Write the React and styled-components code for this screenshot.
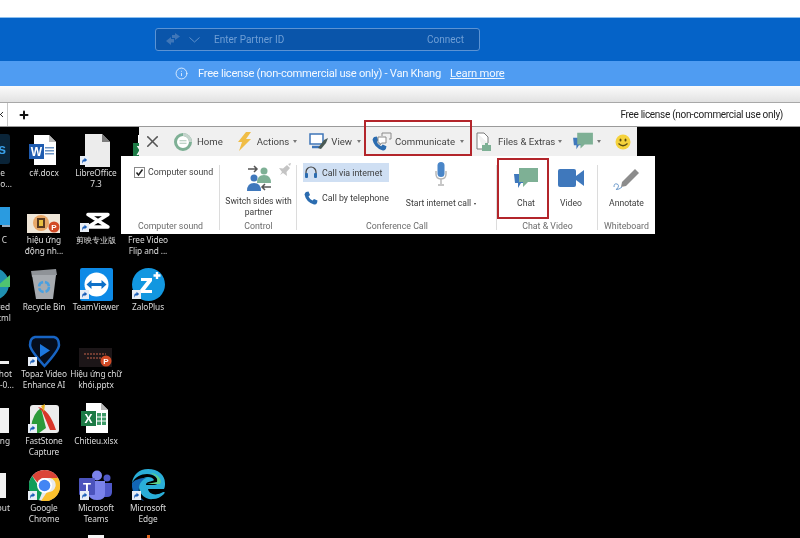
import React from "react";
import styled, { createGlobalStyle } from "styled-components";
import { Info, X, Plus } from "lucide-react";

const Global = createGlobalStyle`
  html, body { margin: 0; padding: 0; background: #000; }
  body { font-family: "Roboto", "Liberation Sans", sans-serif; overflow: hidden; }
`;

const Page = styled.div`
  width: 800px;
  height: 538px;
  display: flex;
  flex-direction: column;
  overflow: hidden;
  filter: blur(0.3px);
  & > * {
    flex-shrink: 0;
  }
`;

const TopWhite = styled.div`
  height: 18px;
  background: #fff;
  border-bottom: 1px solid #8cc0f0;
  box-sizing: border-box;
`;

const PartnerBar = styled.div`
  height: 43px;
  background: #0563c8;
  padding: 10px 0 0 155px;
  box-sizing: border-box;
`;

const PartnerInput = styled.div`
  width: 325px;
  height: 23px;
  box-sizing: border-box;
  display: flex;
  align-items: center;
  padding: 0 15px 0 10px;
  background: #0a55aa;
  border: 1px solid #5b93d4;
  border-radius: 3px;
  color: #6f9fd6;
  font-size: 10px;
`;

const PartnerPlaceholder = styled.span`
  margin-left: 14px;
  flex: 1;
`;

const LicenseBar = styled.div`
  height: 25px;
  background: #4f9cf2;
  color: #f2f8ff;
  display: flex;
  align-items: center;
  padding-left: 175px;
  font-size: 11.2px;
  white-space: nowrap;
`;

const LicenseText = styled.span`
  margin-left: 10px;
  width: 252px;
  letter-spacing: -0.28px;
`;

const LearnMore = styled.span`
  text-decoration: underline;
  letter-spacing: -0.2px;
`;

const GrayStrip = styled.div`
  height: 16px;
  background: linear-gradient(#fbfbfb, #e2e2e2);
  border-bottom: 1px solid #a8a8a8;
`;

const TabStrip = styled.div`
  height: 24px;
  background: #fff;
  border-bottom: 1px solid #9a9a9a;
  box-sizing: border-box;
  display: flex;
  align-items: center;
  font-size: 10px;
  color: #222;
`;

const TabClose = styled.div`
  width: 11px;
  height: 100%;
  border-right: 1px solid #c8c8c8;
  display: flex;
  align-items: center;
  justify-content: flex-start;
  margin-left: -4px;
`;

const TabPlus = styled.div`
  margin-left: 10px;
  flex: 1;
  display: flex;
`;

const TabNote = styled.span`
  margin-right: 17px;
  letter-spacing: -0.3px;
`;

const Desktop = styled.div`
  position: relative;
  flex: 1 1 0;
  min-height: 0;
  background: #000;
`;

const IconGrid = styled.div`
  display: grid;
  grid-template-columns: repeat(4, 52px);
  grid-auto-rows: 67px;
  margin-left: -34px;
  padding-top: 6px;
`;

const Cell = styled.div`
  display: flex;
  flex-direction: column;
  align-items: center;
`;

const IconBox = styled.div`
  position: relative;
  width: 34px;
  height: 34px;
  display: flex;
  align-items: ${(p) => (p.$top ? "flex-start" : "center")};
  justify-content: center;
`;

const CutIcon = styled(IconBox)`
  align-self: flex-end;
  margin-right: 8px;
  overflow: hidden;
`;

const Shortcut = styled.div`
  position: absolute;
  left: 1px;
  bottom: 2px;
  width: 9px;
  height: 9px;
  background: #e8eef6;
  display: flex;
`;

const DeskLabel = styled.div`
  width: 52px;
  font-family: "Noto Sans", sans-serif;
  font-size: 8.3px;
  line-height: 11px;
  color: #dcdcdc;
  text-align: center;
  white-space: pre-line;
  letter-spacing: -0.1px;
`;

const CutLine = styled.div`
  width: 52px;
  box-sizing: border-box;
  padding-right: ${(p) => 18 - p.$end}px;
  font-family: "Noto Sans", sans-serif;
  font-size: 8.3px;
  line-height: 11px;
  color: #dcdcdc;
  text-align: right;
`;

const Panel = styled.div`
  position: absolute;
  left: 121px;
  top: 0;
  width: 534px;
  display: flex;
  flex-direction: column;
  align-items: flex-start;
`;

const Toolbar = styled.div`
  margin-left: 18px;
  width: 498px;
  height: 29px;
  background: #f0f0f0;
  display: flex;
  align-items: center;
  font-size: 9.6px;
  color: #444;
  box-sizing: border-box;
  padding-left: 4px;
`;

const ToolItem = styled.div`
  display: flex;
  align-items: center;
  gap: ${(p) => p.$gap || 3}px;
  margin-left: ${(p) => p.$ml || 0}px;
  white-space: nowrap;
`;

const Caret = styled.span`
  width: 0;
  height: 0;
  border-left: 2.5px solid transparent;
  border-right: 2.5px solid transparent;
  border-top: 3px solid #777;
  margin-left: ${(p) => p.$ml || 0}px;
`;

const Ribbon = styled.div`
  width: 534px;
  height: 78px;
  background: #fff;
  display: flex;
`;

const Group = styled.div`
  width: ${(p) => p.$w}px;
  box-sizing: border-box;
  display: flex;
  flex-direction: column;
  position: relative;
  &::after {
    content: "";
    position: absolute;
    right: 0;
    top: 9px;
    bottom: 4px;
    width: 1px;
    background: ${(p) => (p.$last ? "transparent" : "#dcdcdc")};
  }
`;

const GroupBody = styled.div`
  flex: 1;
  display: flex;
  min-height: 0;
`;

const GroupTitle = styled.div`
  height: 16px;
  text-align: center;
  font-size: 8.8px;
  line-height: 16px;
  color: #6c6c6c;
  white-space: nowrap;
`;

const CheckRow = styled.div`
  display: flex;
  align-items: center;
  gap: 3px;
  padding: 10px 0 0 13px;
  height: 12px;
  font-size: 8.8px;
  color: #444;
`;

const CheckBox = styled.span`
  width: 11px;
  height: 11px;
  box-sizing: border-box;
  border: 1px solid #8a8a8a;
  background: #fff;
  display: flex;
`;

const BigButton = styled.div`
  width: ${(p) => p.$w || 50}px;
  margin-left: ${(p) => p.$ml || 0}px;
  display: flex;
  flex-direction: column;
  align-items: center;
  font-size: 8.6px;
  line-height: 11px;
  color: #3c3c3c;
  text-align: center;
  white-space: nowrap;
`;

const BigIcon = styled.div`
  height: ${(p) => p.$h || 42}px;
  padding-top: ${(p) => p.$pt || 0}px;
  box-sizing: border-box;
  display: flex;
  align-items: flex-start;
  justify-content: center;
  position: relative;
  width: 100%;
`;

const Pin = styled.div`
  position: absolute;
  right: 5px;
  top: 7px;
  display: flex;
`;

const CallList = styled.div`
  width: 90px;
  padding: 7px 0 0 6px;
  display: flex;
  flex-direction: column;
  gap: 6px;
`;

const CallRow = styled.div`
  width: 86px;
  height: 19px;
  box-sizing: border-box;
  display: flex;
  align-items: center;
  gap: 4px;
  padding-left: 1px;
  font-size: 8.8px;
  color: #3c3c3c;
  white-space: nowrap;
  background: ${(p) => (p.$active ? "#cfdff3" : "transparent")};
`;

const TinyCaret = styled.span`
  display: inline-block;
  margin-left: 3px;
  vertical-align: middle;
  border-left: 1.5px solid transparent;
  border-right: 1.5px solid transparent;
  border-top: 2.5px solid #333;
`;

const Annotation = styled.div`
  position: absolute;
  left: ${(p) => p.$x}px;
  top: ${(p) => p.$y}px;
  width: ${(p) => p.$w}px;
  height: ${(p) => p.$h}px;
  box-sizing: border-box;
  border: 2.5px solid #b3252b;
  pointer-events: none;
`;

const Swap = () => (
  <svg width="14" height="13" viewBox="0 0 14 13">
    <path d="M6 2h3V0l5 3.500L9 7V5H6zM8 6H5V4L0 8l5 4V9.500h3z" fill="#3f76b8" />
  </svg>
);

const Chevron = () => (
  <svg width="11" height="6" viewBox="0 0 11 6" style={{ marginLeft: 9 }}>
    <path d="M.5.500 5.500 5 10.500.500" fill="none" stroke="#5c90cc" />
  </svg>
);

const ShortcutMark = () => (
  <Shortcut>
    <svg width="9" height="9" viewBox="0 0 10 10">
      <path d="M2.500 8.500V5.500Q2.500 3.500 5 3.500V2L8 4.500 5 7V5.500Q3.500 5.500 2.500 8.500z" fill="#1b5fb8" />
    </svg>
  </Shortcut>
);

const DocBase = ({ children, body = "#fff" }) => (
  <svg width="32" height="32" viewBox="0 0 32 32">
    <path d="M6 1h15l7 7v23H6z" fill={body} />
    <path d="M21 1l7 7h-7z" fill="#b8b8b8" />
    {children}
  </svg>
);

const WordDoc = () => (
  <DocBase>
    <rect x="17" y="13" width="9" height="1.500" fill="#6d94c4" />
    <rect x="17" y="16" width="9" height="1.500" fill="#6d94c4" />
    <rect x="17" y="19" width="9" height="1.500" fill="#6d94c4" />
    <rect x="1" y="10" width="15" height="15" fill="#1f5cb0" />
    <text x="8.500" y="21.500" fontSize="12" fontWeight="700" fill="#fff" textAnchor="middle" fontFamily="Liberation Sans">W</text>
  </DocBase>
);

const ExcelDoc = () => (
  <DocBase>
    <rect x="17" y="11" width="9" height="12" fill="#3e9a68" />
    <path d="M17 15h9M17 19h9M21.500 11v12" stroke="#fff" strokeWidth="1" />
    <rect x="1" y="9" width="15" height="15" fill="#1c7a45" />
    <text x="8.500" y="21" fontSize="12" fontWeight="700" fill="#fff" textAnchor="middle" fontFamily="Liberation Sans">X</text>
  </DocBase>
);

const Libre = () => (
  <svg width="32" height="33" viewBox="0 0 32 33">
    <path d="M5 0h17l8 8v25H5z" fill="#ececec" />
    <path d="M22 0l8 8h-8z" fill="#7d7d7d" />
  </svg>
);

const Thumb = ({ bg, dark }) => (
  <svg width="34" height="34" viewBox="0 0 34 34">
    <rect x="0" y="14" width="33" height="19" fill={bg} />
    {dark ? (
      <path d="M5 20h22M8 24h16" stroke="#8a4a3a" strokeWidth="1.500" strokeDasharray="2 1" />
    ) : (
      <g>
        <circle cx="14" cy="23" r="8" fill="#e8a868" />
        <rect x="10" y="18" width="8" height="10" fill="#5a3a20" />
        <rect x="12" y="20" width="4" height="6" fill="#e8c040" />
      </g>
    )}
    <circle cx="27" cy="27" r="5.500" fill="#d24a25" />
    <text x="27" y="30" fontSize="8" fontWeight="700" fill="#fff" textAnchor="middle" fontFamily="Liberation Sans">P</text>
  </svg>
);

const CapCut = () => (
  <svg width="24" height="18" viewBox="0 0 24 18" style={{ marginTop: 7, marginLeft: 3 }}>
    <path d="M2 2.500H22L2 15H22Z" fill="none" stroke="#fff" strokeWidth="3.400" strokeLinejoin="round" />
  </svg>
);

const RecycleBin = () => (
  <svg width="28" height="32" viewBox="0 0 28 32">
    <path d="M1 3l25-2 1 6-25 2z" fill="#8f9398" />
    <path d="M2 7h24l-3 24H6z" fill="#a7abb0" />
    <circle cx="14" cy="19" r="5" fill="none" stroke="#4aa0e0" strokeWidth="2.500" strokeDasharray="6 2" />
  </svg>
);

const TeamViewer = () => (
  <svg width="33" height="33" viewBox="0 0 33 33">
    <rect width="33" height="33" rx="2" fill="#0d8ae6" />
    <circle cx="16.500" cy="16.500" r="12" fill="#fff" />
    <path d="M6.500 16.500l5-4.500v3h10v-3l5 4.500-5 4.500v-3h-10v3z" fill="#0d70c8" />
  </svg>
);

const Zalo = () => (
  <svg width="33" height="33" viewBox="0 0 33 33">
    <circle cx="16.500" cy="16.500" r="16.500" fill="#1297e0" />
    <path d="M9 10h11v3l-7 9h7v3H8v-3l7-9H9z" fill="#fff" />
    <path d="M25 4v7M21.500 7.500h7" stroke="#fff" strokeWidth="2.400" />
  </svg>
);

const Topaz = () => (
  <svg width="33" height="33" viewBox="0 0 33 33">
    <path d="M7 2h19q5 1 5 8 0 5-14.500 21Q2 15 2 10q0-7 5-8z" fill="#050d1c" stroke="#1764c4" strokeWidth="2.500" />
    <path d="M12 9l10 6.500L12 22z" fill="#1c78e0" />
  </svg>
);

const FastStone = () => (
  <svg width="31" height="31" viewBox="0 0 31 31">
    <rect x="1" y="2" width="29" height="28" rx="3" fill="#ececec" />
    <path d="M2 24Q4 10 12 5l5 20-7 5H5z" fill="#2c9a3a" />
    <path d="M9 4Q20 6 27 27h-6L13 8z" fill="#d8362a" />
    <path d="M12 3l4-2-1 8z" fill="#e8b020" />
  </svg>
);

const Chrome = () => (
  <svg width="31" height="31" viewBox="0 0 31 31">
    <circle cx="15.500" cy="15.500" r="15.500" fill="#e8eaed" />
    <path d="M15.500 0A15.500 15.500 0 0 1 29 8H15.500a7.500 7.500 0 0 0-7 4.500L3.200 6A15.500 15.500 0 0 1 15.500 0z" fill="#db4437" />
    <path d="M3.200 6l6 9.500a7 7 0 0 0 4 6.500L10 30.200A15.500 15.500 0 0 1 3.200 6z" fill="#0f9d58" />
    <path d="M29 8a15.500 15.500 0 0 1-17 23l6-9a7 7 0 0 0 3-14z" fill="#fbc02d" />
    <circle cx="15.500" cy="15.500" r="7.500" fill="#fff" />
    <circle cx="15.500" cy="15.500" r="5.800" fill="#4285f4" />
  </svg>
);

const Teams = () => (
  <svg width="34" height="31" viewBox="0 0 34 31">
    <circle cx="18" cy="5.500" r="5" fill="#7b83eb" />
    <circle cx="28" cy="8" r="3.500" fill="#5059c9" />
    <path d="M23 13h10v9q0 5-5 5h-4z" fill="#5059c9" />
    <path d="M9 11h17v13q0 6-8 6-7 0-9-6z" fill="#7b83eb" />
    <rect x="0" y="8" width="16" height="17" rx="1" fill="#4b53bc" />
    <text x="8" y="21.500" fontSize="13" fontWeight="700" fill="#fff" textAnchor="middle" fontFamily="Liberation Sans">T</text>
  </svg>
);

const Edge = () => (
  <svg width="33" height="33" viewBox="0 0 33 33">
    <path d="M16 0C7 0 1 6 0 14c3-6 9-9 15-9 7 0 11 4 11 8 0 2-2 3-4 3h-8c0-4 6-3 8-5-1-2-3-3-6-3-6 0-10 5-9 11 1 7 7 12 14 11 4 0 8-2 11-5 2-3-1-2-3-1-6 3-12 1-13-4h16c1-2 1-4 1-6C33 6 26 0 16 0z" fill="#2aaed8" />
    <path d="M0 14c-1 8 4 16 12 18-4-3-6-8-5-13 0-4 3-8 7-10C8 9 2 11 0 14z" fill="#1265b5" />
    <path d="M15 15h13c3-3-2-11-10-11C24 6 26 9 25 13z" fill="#5fd08a" />
  </svg>
);

const PartIcon = ({ kind }) => {
  if (kind === "ps")
    return (
      <svg width="34" height="32" viewBox="0 0 34 32">
        <rect x="0" y="0" width="34" height="30" rx="3" fill="#0a2438" />
        <text x="30" y="20" fontSize="14" fontWeight="700" fill="#3aa0e8" textAnchor="end" fontFamily="Liberation Sans">s</text>
      </svg>
    );
  if (kind === "pc")
    return (
      <svg width="34" height="34" viewBox="0 0 34 34">
        <rect x="0" y="7" width="34" height="18" fill="#2a9be0" />
        <rect x="26" y="25" width="8" height="2" fill="#9ab" />
      </svg>
    );
  if (kind === "circle")
    return (
      <svg width="34" height="34" viewBox="0 0 34 34">
        <circle cx="17" cy="17" r="16" fill="#1f8fb0" />
        <path d="M34 8v12H20z" fill="#4fc470" />
      </svg>
    );
  if (kind === "bar")
    return (
      <svg width="34" height="34" viewBox="0 0 34 34">
        <rect x="0" y="27" width="33" height="3" fill="#eee" />
      </svg>
    );
  return (
    <svg width="34" height="34" viewBox="0 0 34 34">
      <rect x="0" y={kind === "doc2" ? 5 : 7} width={kind === "doc2" ? 30 : 33} height="25" fill="#f2f2f2" />
    </svg>
  );
};

const HomeIcon = () => (
  <svg width="20" height="20" viewBox="0 0 20 20">
    <circle cx="10" cy="10" r="7.500" fill="#fff" stroke="#7eb095" strokeWidth="3" />
    <path d="M17.500 10A7.500 7.500 0 0 0 10 2.500" fill="none" stroke="#c4d4cc" strokeWidth="3" />
    <path d="M6.500 8.800h7M6.500 11.200h7" stroke="#a9c6b6" strokeWidth="1.100" />
  </svg>
);

const Bolt = () => (
  <svg width="15" height="19" viewBox="0 0 15 19">
    <path d="M9 0L1 10h4L2 19 14 7H9l5-7z" fill="#f0bd45" />
  </svg>
);

const ViewIcon = () => (
  <svg width="19" height="17" viewBox="0 0 19 17">
    <rect x="1" y="1" width="13" height="10" fill="#fff" stroke="#3f76b8" strokeWidth="1.500" />
    <path d="M3 14h9" stroke="#3f76b8" strokeWidth="2.500" />
    <path d="M9 15l6-8 4-2-2 5-5 6z" fill="#4a5a55" />
  </svg>
);

const PhoneGlyph = ({ size = 13, color = "#2b6cb0" }) => (
  <svg width={size} height={size} viewBox="0 0 14 14">
    <path d="M2 1l2.500-.500L6 4 4.500 5.500q1 2.500 4 4L10 8l3.500 1.500L13 12q-1 2-3 1.500Q2 11 .5 3.500 1 1.500 2 1z" fill={color} />
  </svg>
);

const CommIcon = () => (
  <svg width="20" height="19" viewBox="0 0 20 19">
    <g transform="translate(0 4)">
      <PhoneGlyph size={15} />
    </g>
    <path d="M6 5h8v6H9.500L8 13v-2H6z" fill="#fff" stroke="#8a8a8a" />
    <path d="M10 4V1h9v6h-2" fill="none" stroke="#8a8a8a" />
  </svg>
);

const FilesIcon = () => (
  <svg width="20" height="20" viewBox="0 0 20 20">
    <path d="M2 1h7l4 4v6M2 1v16h6" fill="#fff" stroke="#7a7a7a" />
    <path d="M7 13h3v-2h3v2h3v6H7z" fill="#7eb095" />
  </svg>
);

const ChatBubbles = ({ w = 24, h = 23 }) => (
  <svg width={w} height={h} viewBox="0 0 24 23">
    <path d="M0 7h10v9H7l-3 5v-5H1z" fill="#3f78bc" />
    <path d="M5 1h19v14H14l-5 5v-5H5z" fill="#7eb095" />
  </svg>
);

const Smiley = () => (
  <svg width="16" height="16" viewBox="0 0 16 16">
    <circle cx="8" cy="8" r="7.500" fill="#f5d23c" />
    <ellipse cx="5.500" cy="6" rx="1" ry="1.600" fill="#5a4a10" />
    <ellipse cx="10.500" cy="6" rx="1" ry="1.600" fill="#5a4a10" />
    <path d="M3.500 9.500Q8 14 12.500 9.500" fill="none" stroke="#5a4a10" strokeWidth="1.200" />
  </svg>
);

const SwitchIcon = () => (
  <svg width="26" height="28" viewBox="0 0 26 28">
    <circle cx="8" cy="14" r="3.500" fill="#3f78bc" />
    <path d="M1 27q0-8 7-8t7 8z" fill="#3f78bc" />
    <circle cx="18" cy="7" r="3.500" fill="#7eb095" />
    <path d="M11 19q0-8 7-8t7 8z" fill="#7eb095" />
    <path d="M2 5h9M8 2l3 3-3 3M25 23h-9M19 20l-3 3 3 3" fill="none" stroke="#555" strokeWidth="1.500" />
  </svg>
);

const PinIcon = () => (
  <svg width="13" height="13" viewBox="0 0 13 13">
    <path d="M0 5l4 .500L8 2l3 3-3.500 4 .500 4-4-3-3 2 2-3z" fill="#c4c4c4" />
    <path d="M9 1l3-1-1 3z" fill="#c4c4c4" />
  </svg>
);

const Headset = () => (
  <svg width="14" height="14" viewBox="0 0 14 14">
    <path d="M2 8V6a5 5 0 0 1 10 0v2" fill="none" stroke="#444" strokeWidth="1.200" />
    <rect x="1" y="7" width="3" height="5" rx="1" fill="#2b6cb0" />
    <rect x="10" y="7" width="3" height="5" rx="1" fill="#2b6cb0" />
  </svg>
);

const Mic = () => (
  <svg width="12" height="24" viewBox="0 0 12 24">
    <rect x="2.500" y="0" width="7" height="15" rx="3.500" fill="#4a86c8" />
    <path d="M1 9v3q0 5 5 5t5-5V9M6 17v5M3 23h6" fill="none" stroke="#b4b4b4" strokeWidth="1.400" />
  </svg>
);

const VideoIcon = () => (
  <svg width="26" height="18" viewBox="0 0 26 18">
    <rect x="0" y="0" width="18" height="18" rx="2" fill="#3f78bc" />
    <path d="M18 7l8-6v16l-8-6z" fill="#3f78bc" />
  </svg>
);

const Pencil = () => (
  <svg width="27" height="23" viewBox="0 0 27 23">
    <path d="M9 15L22 2l4 4L13 19l-5 1z" fill="#8c8c8c" />
    <path d="M1 20q0-4 3-3t0 5q-3 1 2 0l3-2" fill="none" stroke="#6f9ccc" />
  </svg>
);

const DocTop = () => (
  <svg width="16" height="4" viewBox="0 0 16 4">
    <rect width="16" height="4" fill="#f4f4f4" />
  </svg>
);

const OrangeTick = () => (
  <svg width="3" height="4" viewBox="0 0 3 4">
    <rect width="3" height="4" fill="#e0641e" />
  </svg>
);

const desktopItems = [
  { icon: <PartIcon kind="ps" />, cut: [["e", 5], ["ho...", 12]] },
  { icon: <WordDoc />, label: "c#.docx" },
  { icon: <Libre />, label: "LibreOffice\n7.3", shortcut: true },
  { icon: <ExcelDoc /> },
  { icon: <PartIcon kind="pc" />, cut: [["C", 7]] },
  { icon: <Thumb bg="#efe6d8" />, label: "hiệu ứng\nđộng nh..." },
  { icon: <CapCut />, label: "剪映专业版", shortcut: true },
  { label: "Free Video\nFlip and ..." },
  { icon: <PartIcon kind="circle" />, cut: [["red", 10], ["tml", 11]] },
  { icon: <RecycleBin />, label: "Recycle Bin" },
  { icon: <TeamViewer />, label: "TeamViewer", shortcut: true },
  { icon: <Zalo />, label: "ZaloPlus", shortcut: true },
  { icon: <PartIcon kind="bar" />, cut: [["hot", 12], ["-0...", 14]] },
  { icon: <Topaz />, label: "Topaz Video\nEnhance AI", shortcut: true },
  { icon: <Thumb bg="#1c1618" dark />, label: "Hiệu ứng chữ\nkhói.pptx" },
  {},
  { icon: <PartIcon kind="doc" />, cut: [["ng", 10]] },
  { icon: <FastStone />, label: "FastStone\nCapture", shortcut: true },
  { icon: <ExcelDoc />, label: "Chitieu.xlsx" },
  {},
  { icon: <PartIcon kind="doc2" />, cut: [["out", 10]] },
  { icon: <Chrome />, label: "Google\nChrome", shortcut: true },
  { icon: <Teams />, label: "Microsoft\nTeams", shortcut: true },
  { icon: <Edge />, label: "Microsoft\nEdge", shortcut: true },
  {},
  {},
  { icon: <DocTop />, top: true },
  { icon: <OrangeTick />, top: true },
];

const DesktopIcon = ({ item }) => {
  const Box = item.cut ? CutIcon : IconBox;
  return (
    <Cell>
      <Box $top={item.top}>
        {item.icon}
        {item.shortcut && <ShortcutMark />}
      </Box>
      {item.cut
        ? item.cut.map(([text, end]) => (
            <CutLine key={text} $end={end}>{text}</CutLine>
          ))
        : <DeskLabel>{item.label}</DeskLabel>}
    </Cell>
  );
};

export default function App() {
  return (
    <Page>
      <Global />
      <TopWhite />
      <PartnerBar>
        <PartnerInput>
          <Swap />
          <Chevron />
          <PartnerPlaceholder>Enter Partner ID</PartnerPlaceholder>
          <span>Connect</span>
        </PartnerInput>
      </PartnerBar>
      <LicenseBar>
        <Info size={13} strokeWidth={1.5} />
        <LicenseText>Free license (non-commercial use only) - Van Khang</LicenseText>
        <LearnMore>Learn more</LearnMore>
      </LicenseBar>
      <GrayStrip />
      <TabStrip>
        <TabClose>
          <X size={9} strokeWidth={2.5} />
        </TabClose>
        <TabPlus>
          <Plus size={12} strokeWidth={4} color="#111" />
        </TabPlus>
        <TabNote>Free license (non-commercial use only)</TabNote>
      </TabStrip>
      <Desktop>
        <IconGrid>
          {desktopItems.map((item, i) => (
            <DesktopIcon key={i} item={item} />
          ))}
        </IconGrid>
        <Panel>
          <Toolbar>
            <X size={19} strokeWidth={2} color="#555" />
            <ToolItem $ml={11} $gap={4}><HomeIcon />Home</ToolItem>
            <ToolItem $ml={14} $gap={5}><Bolt />Actions<Caret $ml={-1} /></ToolItem>
            <ToolItem $ml={12}><ViewIcon />View<Caret $ml={2} /></ToolItem>
            <ToolItem $ml={11}><CommIcon />Communicate<Caret $ml={2} /></ToolItem>
            <ToolItem $ml={11}><FilesIcon />Files &amp; Extras<Caret /></ToolItem>
            <ToolItem $ml={11} $gap={4}><ChatBubbles w={20} h={19} /><Caret /></ToolItem>
            <ToolItem $ml={14}><Smiley /></ToolItem>
          </Toolbar>
          <Ribbon>
            <Group $w={99}>
              <GroupBody>
                <CheckRow>
                  <CheckBox>
                    <svg width="9" height="9" viewBox="0 0 9 9">
                      <path d="M1.500 4.500 3.500 7 7.500 1.500" fill="none" stroke="#222" strokeWidth="1.500" />
                    </svg>
                  </CheckBox>
                  Computer sound
                </CheckRow>
              </GroupBody>
              <GroupTitle>Computer sound</GroupTitle>
            </Group>
            <Group $w={77}>
              <GroupBody>
                <BigButton $w={77}>
                  <BigIcon $h={41} $pt={8}>
                    <SwitchIcon />
                    <Pin><PinIcon /></Pin>
                  </BigIcon>
                  <span>Switch sides with</span>
                  <span>partner</span>
                </BigButton>
              </GroupBody>
              <GroupTitle>Control</GroupTitle>
            </Group>
            <Group $w={200}>
              <GroupBody>
                <CallList>
                  <CallRow $active><Headset />Call via internet</CallRow>
                  <CallRow><PhoneGlyph size={14} />Call by telephone</CallRow>
                </CallList>
                <BigButton $w={74} $ml={11}>
                  <BigIcon $pt={6}><Mic /></BigIcon>
                  <span>Start internet call<TinyCaret /></span>
                </BigButton>
              </GroupBody>
              <GroupTitle>Conference Call</GroupTitle>
            </Group>
            <Group $w={101}>
              <GroupBody>
                <BigButton $w={50} $ml={4}>
                  <BigIcon $pt={11}><ChatBubbles /></BigIcon>
                  <span>Chat</span>
                </BigButton>
                <BigButton $w={40}>
                  <BigIcon $pt={13}><VideoIcon /></BigIcon>
                  <span>Video</span>
                </BigButton>
              </GroupBody>
              <GroupTitle>Chat &amp; Video</GroupTitle>
            </Group>
            <Group $w={57} $last>
              <GroupBody>
                <BigButton $w={57}>
                  <BigIcon $pt={11}><Pencil /></BigIcon>
                  <span>Annotate</span>
                </BigButton>
              </GroupBody>
              <GroupTitle>Whiteboard</GroupTitle>
            </Group>
          </Ribbon>
        </Panel>
        <Annotation $x={364} $y={-7} $w={108} $h={36} />
        <Annotation $x={497} $y={31} $w={52} $h={61} />
      </Desktop>
    </Page>
  );
}
